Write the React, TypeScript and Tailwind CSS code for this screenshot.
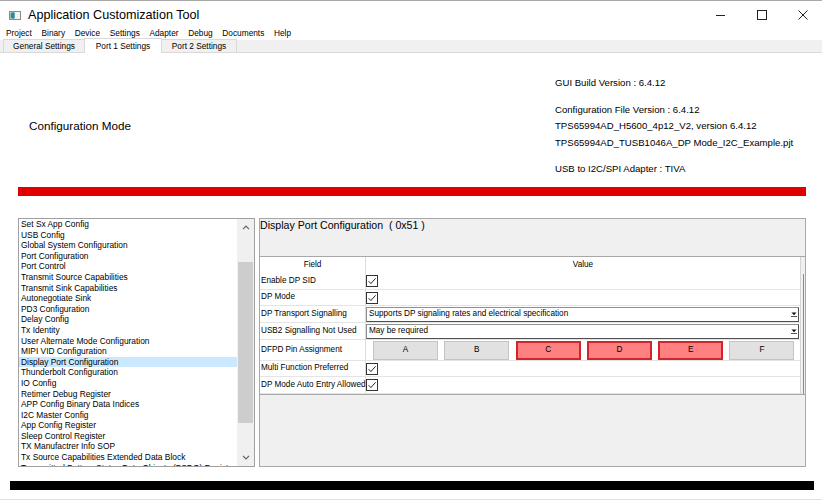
import React from "react";

const sections = [
  "Set Sx App Config",
  "USB Config",
  "Global System Configuration",
  "Port Configuration",
  "Port Control",
  "Transmit Source Capabilities",
  "Transmit Sink Capabilities",
  "Autonegotiate Sink",
  "PD3 Configuration",
  "Delay Config",
  "Tx Identity",
  "User Alternate Mode Configuration",
  "MIPI VID Configuration",
  "Display Port Configuration",
  "Thunderbolt Configuration",
  "IO Config",
  "Retimer Debug Register",
  "APP Config Binary Data Indices",
  "I2C Master Config",
  "App Config Register",
  "Sleep Control Register",
  "TX Manufactrer Info SOP",
  "Tx Source Capabilities Extended Data Block",
  "Transmitted Battery Status Data Objects (BSDO) Register",
];

const menus = ["Project", "Binary", "Device", "Settings", "Adapter", "Debug", "Documents", "Help"];

const pins = [
  { label: "A", on: false },
  { label: "B", on: false },
  { label: "C", on: true },
  { label: "D", on: true },
  { label: "E", on: true },
  { label: "F", on: false },
];

function Check() {
  return (
    <div className="w-[12px] h-[12px] border border-[#333333] bg-white flex items-center justify-center">
      <svg width="10" height="10" viewBox="0 0 10 10">
        <path d="M1.6 5.2 L3.9 7.6 L8.6 2.3" fill="none" stroke="#222" strokeWidth="1" />
      </svg>
    </div>
  );
}

function Combo({ value }: { value: string }) {
  return (
    <div className="w-[433px] h-[15px] flex items-center border border-[#8f8f8f] border-r-[#505050] border-b-[#505050] bg-white">
      <span className="flex-1 pl-[2px] whitespace-nowrap overflow-hidden">{value}</span>
      <div className="w-[8px] h-full flex flex-col items-center justify-center">
        <svg width="6" height="6" viewBox="0 0 6 6">
          <path d="M0.5 1.5 L5.5 1.5 L3 4.2 Z" fill="#111" />
          <path d="M0 5.5 L6 5.5" stroke="#555" strokeWidth="1" />
        </svg>
      </div>
    </div>
  );
}

function Row({ label, h, children }: { label: string; h: string; children?: React.ReactNode }) {
  return (
    <div className={`flex border-b border-[#e4e4e4] ${h}`}>
      <div className="w-[106px] shrink-0 border-r border-[#dcdcdc] pl-[1px] flex items-center whitespace-nowrap">
        {label}
      </div>
      <div className="flex-1 flex items-center">{children}</div>
    </div>
  );
}

export default function App() {
  return (
    <div className="w-[822px] h-[500px] overflow-hidden bg-white flex flex-col font-['Liberation_Sans',Arial,sans-serif] text-[#1a1a1a]">
      {/* Title bar */}
      <div className="h-[26px] shrink-0 flex items-center pt-[3px] border-t border-[#a8a8a8]">
        <svg className="ml-[9px]" width="12" height="9" viewBox="0 0 12 9">
          <rect x="0.5" y="0.5" width="11" height="8" fill="#f4f4f4" stroke="#8a8a8a" />
          <rect x="1.5" y="1.5" width="4" height="6" fill="#2f8f6f" />
          <rect x="3.5" y="1.5" width="2" height="6" fill="#3a7fc0" />
        </svg>
        <span className="ml-[7px] text-[12.6px] text-black">Application Customization Tool</span>
        <div className="ml-auto flex items-center gap-[31.5px] pr-[14px]">
          <svg width="9" height="9" viewBox="0 0 9 9">
            <path d="M0 4.5 L9 4.5" stroke="#222" strokeWidth="1" />
          </svg>
          <svg width="10" height="10" viewBox="0 0 10 10">
            <rect x="0.5" y="0.5" width="9" height="9" fill="none" stroke="#222" strokeWidth="1" />
          </svg>
          <svg width="10" height="10" viewBox="0 0 10 10">
            <path d="M0.5 0.5 L9.5 9.5 M9.5 0.5 L0.5 9.5" stroke="#222" strokeWidth="1" />
          </svg>
        </div>
      </div>

      {/* Menu bar */}
      <div className="h-[14px] shrink-0 flex items-center gap-[9.7px] pl-[6px] text-[8.3px] text-black">
        {menus.map((m) => (
          <span key={m}>{m}</span>
        ))}
      </div>

      {/* Tabs */}
      <div className="h-[13px] shrink-0 bg-[#f0f0f0] border-b border-[#d9d9d9] flex items-end pl-[3px] text-[8.3px] text-black">
        <div className="w-[81px] h-[13px] border-l border-t border-[#d9d9d9] flex items-center justify-center">General Settings</div>
        <div className="w-[78px] h-[15px] -mb-px bg-white border-x border-t border-[#d9d9d9] flex items-center justify-center">
          Port 1 Settings
        </div>
        <div className="w-[75px] h-[13px] border-r border-t border-[#d9d9d9] flex items-center justify-center">Port 2 Settings</div>
      </div>

      {/* Main */}
      <div className="flex-1 flex flex-col">
        <div className="h-[134px] shrink-0 flex">
          <div className="w-[555px] pl-[29px] pt-[65px] text-[11.7px] leading-[16px] text-black">Configuration Mode</div>
          <div className="pt-[22px] text-[9.6px] leading-[16.5px] text-black whitespace-nowrap">
            <div>GUI Build Version : 6.4.12</div>
            <div className="mt-[10px]">Configuration File Version : 6.4.12</div>
            <div>TPS65994AD_H5600_4p12_V2, version 6.4.12</div>
            <div>TPS65994AD_TUSB1046A_DP Mode_I2C_Example.pjt</div>
            <div className="mt-[9.5px]">USB to I2C/SPI Adapter : TIVA</div>
          </div>
        </div>

        <div className="ml-[18px] w-[788px] h-[9px] bg-[#e00000]" />

        <div className="mt-[22px] ml-[18px] h-[249px] flex gap-[4px]">
          {/* Section list */}
          <div className="w-[237px] h-full border border-[#a0a0a0] flex bg-white">
            <div className="flex-1 overflow-hidden text-[8.4px] text-black">
              {sections.map((s) => (
                <div
                  key={s}
                  className={`h-[10.6px] leading-[10.6px] pl-[2px] whitespace-nowrap ${
                    s === "Display Port Configuration" ? "bg-[#cce8ff]" : ""
                  }`}
                >
                  {s}
                </div>
              ))}
            </div>
            <div className="w-[17px] h-full bg-[#f0f0f0] flex flex-col">
              <div className="h-[17px] flex items-center justify-center">
                <svg width="8" height="5" viewBox="0 0 8 5">
                  <path d="M1 4.2 L4 1.2 L7 4.2" fill="none" stroke="#606060" strokeWidth="1.2" />
                </svg>
              </div>
              <div className="mt-[26px] h-[161px] mx-[1px] bg-[#cdcdcd]" />
              <div className="flex-1" />
              <div className="h-[17px] flex items-center justify-center">
                <svg width="8" height="5" viewBox="0 0 8 5">
                  <path d="M1 0.8 L4 3.8 L7 0.8" fill="none" stroke="#606060" strokeWidth="1.2" />
                </svg>
              </div>
            </div>
          </div>

          {/* Detail panel */}
          <div className="w-[547px] h-full border border-[#a8a8a8] bg-[#f0f0f0] flex flex-col text-[8.2px] text-black">
            <div className="h-[37px] shrink-0 text-[10.6px] leading-[12px] whitespace-pre">Display Port Configuration  ( 0x51 )</div>
            <div className="flex border-t border-b border-[#a8a8a8]">
              <div className="w-[541px] bg-white border-r border-[#d4d4d4]">
                <div className="flex h-[16px]">
                  <div className="w-[106px] shrink-0 border-r border-[#dcdcdc] flex items-center justify-center">Field</div>
                  <div className="flex-1 flex items-center justify-center">Value</div>
                </div>
                <Row label="Enable DP SID" h="h-[17px]">
                  <Check />
                </Row>
                <Row label="DP Mode" h="h-[16px]">
                  <Check />
                </Row>
                <Row label="DP Transport Signalling" h="h-[17px]">
                  <Combo value="Supports DP signaling rates and electrical specification" />
                </Row>
                <Row label="USB2 Signalling Not Used" h="h-[17px]">
                  <Combo value="May be required" />
                </Row>
                <Row label="DFPD Pin Assignment" h="h-[21px]">
                  <div className="flex gap-[6.3px] pl-[7px]">
                    {pins.map((p) => (
                      <div
                        key={p.label}
                        className={`w-[65px] h-[19px] flex items-center justify-center ${
                          p.on ? "bg-[#ff8080] border-2 border-[#d0262b]" : "bg-[#e1e1e1] border border-[#c4c4c4]"
                        }`}
                      >
                        {p.label}
                      </div>
                    ))}
                  </div>
                </Row>
                <Row label="Multi Function Preferred" h="h-[16px]">
                  <Check />
                </Row>
                <Row label="DP Mode Auto Entry Allowed" h="h-[17px]">
                  <Check />
                </Row>
              </div>
              <div className="w-[4px] flex flex-col">
                <div className="mt-[17px] flex-1 ml-[2px] w-[1px] bg-[#8a8a8a]" />
              </div>
            </div>
            <div className="flex-1" />
          </div>
        </div>

        <div className="mt-[14px] ml-[10px] w-[804px] h-[9px] bg-black" />
        <div className="flex-1" />
        <div className="h-px bg-[#e0e0e0]" />
      </div>
    </div>
  );
}
